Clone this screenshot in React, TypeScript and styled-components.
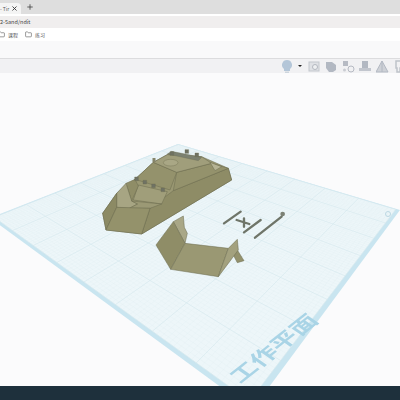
import styled, { createGlobalStyle } from 'styled-components';
import { Folder, Plus, X } from 'lucide-react';

const GlobalStyle = createGlobalStyle`
    html, body {
        margin: 0;
        padding: 0;
        overflow: hidden;
        background: #fbfbfc;
        font-family: "Noto Sans CJK SC", "Noto Sans", sans-serif;
    }
`;

type Point = [number, number];

// the workplane corners as seen on screen
const TOP: Point = [178, 144];
const RIGHT: Point = [400, 210];
const BOTTOM: Point = [252, 410];
const LEFT: Point = [-10, 218];

// unit square to quad, u runs top->right, v runs top->left
function project(u: number, v: number): Point {
    const [x0, y0] = TOP;
    const [x1, y1] = RIGHT;
    const [x2, y2] = BOTTOM;
    const [x3, y3] = LEFT;
    const dx1 = x1 - x2;
    const dx2 = x3 - x2;
    const sx = x0 - x1 + x2 - x3;
    const dy1 = y1 - y2;
    const dy2 = y3 - y2;
    const sy = y0 - y1 + y2 - y3;
    const den = dx1 * dy2 - dx2 * dy1;
    const g = (sx * dy2 - dx2 * sy) / den;
    const h = (dx1 * sy - sx * dy1) / den;
    const a = x1 - x0 + g * x1;
    const b = x3 - x0 + h * x3;
    const d = y1 - y0 + g * y1;
    const e = y3 - y0 + h * y3;
    const w = g * u + h * v + 1;
    return [(a * u + b * v + x0) / w, (d * u + e * v + y0) / w];
}

function quad(min: number, max: number) {
    return [project(min, min), project(max, min), project(max, max), project(min, max)]
        .map((p) => p.join(','))
        .join(' ');
}

function gridPath(steps: number, min: number, max: number) {
    let d = '';
    for (let i = 0; i <= steps; i++) {
        const t = min + ((max - min) * i) / steps;
        const a = project(t, min);
        const b = project(t, max);
        const c = project(min, t);
        const e = project(max, t);
        d += `M${a[0]} ${a[1]}L${b[0]} ${b[1]}M${c[0]} ${c[1]}L${e[0]} ${e[1]}`;
    }
    return d;
}

const HULL_FACES: { points: string; fill: string }[] = [
    { points: '38,250 80,190 135,148 190,97 235,72 335,80 415,115 425,150 155,312 48,300', fill: '#9a9873' },
    { points: '155,312 180,235 250,182 415,115 425,150', fill: '#8e8c66' },
    { points: '260,127 365,100 415,115 250,182', fill: '#94926c' },
    { points: '135,148 190,97 260,127 240,180', fill: '#94926c' },
    { points: '190,97 232,74 335,80 365,100 260,127', fill: '#a09e7b' },
    { points: '360,97 395,110 375,122', fill: '#b5b394' },
    { points: '130,210 145,165 232,185 215,222', fill: '#a09e7a' },
    { points: '108,160 135,148 145,168 125,213', fill: '#8f8d67' },
    { points: '80,190 108,160 125,213 143,222 118,235 80,232', fill: '#a7a583' },
    { points: '125,213 215,222 180,235 118,235 143,222', fill: '#9b9975' },
    { points: '38,250 80,190 80,232 48,300', fill: '#8c8a64' },
    { points: '80,232 180,235 155,312 48,300', fill: '#94926b' },
];

const WALL_FACES: { points: string; fill: string }[] = [
    { points: '262,150 282,182 262,188 250,165', fill: '#93916c' },
    { points: '70,65 100,48 103,82 112,100 105,130', fill: '#a9a787' },
    { points: '18,135 70,65 105,130 62,208', fill: '#8f8d67' },
    { points: '105,130 235,145 205,230 62,208', fill: '#9a9873' },
    { points: '235,145 262,118 265,150 205,230', fill: '#a3a17e' },
];

const HULL_STUDS: Point[] = [
    [139, 146],
    [164, 156],
    [190, 167],
    [218, 179],
    [245, 70],
    [290, 64],
    [320, 74],
];

const TOOL_ICONS = ['photo', 'shape', 'group', 'print', 'warn', 'more'] as const;

function ToolIcon({ kind }: { kind: (typeof TOOL_ICONS)[number] }) {
    return (
        <IconFrame width="13" height="13" viewBox="0 0 13 13">
            {kind === 'photo' && (
                <>
                    <rect x="1" y="2" width="10" height="9" fill="#dfe1e5" stroke="#c3c7cd" />
                    <circle cx="7" cy="7" r="2.5" fill="#eef0f2" stroke="#b4b8c0" />
                </>
            )}
            {kind === 'shape' && <path d="M1 2h6l4 3v5l-3 2H4L1 8z" fill="#b2b8c2" />}
            {kind === 'group' && (
                <>
                    <rect x="1" y="1" width="5" height="5" fill="#b6bac3" />
                    <circle cx="9" cy="9" r="3" fill="none" stroke="#b6bac3" />
                    <circle cx="2.5" cy="10" r="1.5" fill="#c9ccd2" />
                </>
            )}
            {kind === 'print' && (
                <>
                    <rect x="3" y="1" width="6" height="7" fill="#b2b8c2" />
                    <rect x="0" y="8" width="12" height="3" fill="#c2c6ce" />
                </>
            )}
            {kind === 'warn' && <path d="M6 1l6 11H0zM6 1v11" fill="#ced1d7" stroke="#b2b8c2" />}
            {kind === 'more' && <path d="M3 1h6v7H7v4H4V8H3z" fill="none" stroke="#bfc3ca" strokeWidth="1.5" />}
        </IconFrame>
    );
}

function Workplane() {
    return (
        <Scene viewBox="0 73 400 313">
            <polygon points={quad(0, 1)} fill="#c9e5f0" />
            <polygon points={quad(0.006, 0.988)} fill="#edf6f9" />
            <path d={gridPath(80, 0.006, 0.988)} stroke="#e0eef3" strokeWidth="0.3" fill="none" />
            <path d={gridPath(8, 0.006, 0.988)} stroke="#d3e6ed" strokeWidth="0.5" fill="none" />
            <PlaneLabel transform="matrix(.95 -.75 .8 .55 240 384)">工作平面</PlaneLabel>
            <circle cx="388" cy="214" r="2.5" fill="none" stroke="#bcd8e3" strokeWidth="1" />

            <g transform="translate(90 130) scale(0.3333)" stroke="#6e6e52" strokeWidth="1.6" strokeLinejoin="round">
                {HULL_FACES.map((face) => (
                    <polygon key={face.points} points={face.points} fill={face.fill} />
                ))}
                <ellipse cx="242" cy="98" rx="22" ry="10" fill="#a9a785" strokeWidth="1.2" />
                <polygon points="232,72 245,64 335,82 325,92" fill="#7b8070" strokeWidth="1" />
                <path d="M192 96v-12" stroke="#85846a" strokeWidth="9" />
                {HULL_STUDS.map(([x, y]) => (
                    <rect key={`${x}-${y}`} x={x - 5} y={y - 5} width="11" height="11" fill="#6f7263" strokeWidth="1" />
                ))}
            </g>

            <g transform="translate(150 200) scale(0.3333)" stroke="#6e6e52" strokeWidth="1.6" strokeLinejoin="round">
                {WALL_FACES.map((face) => (
                    <polygon key={face.points} points={face.points} fill={face.fill} />
                ))}
                <g stroke="#6f7569" strokeWidth="7" strokeLinecap="round" fill="none">
                    <path d="M222 70L272 35" />
                    <path d="M282 97L332 60" />
                    <path d="M315 113L395 50" />
                    <path d="M260 60L298 72M282 55V80" />
                </g>
                <circle cx="398" cy="42" r="7" fill="#7c8175" stroke="none" />
            </g>
        </Scene>
    );
}

export default function App() {
    return (
        <>
            <GlobalStyle />
            <Page>
                <TabStrip>
                    <Tab>
                        <TabTitle>- Tir</TabTitle>
                        <X size={7} strokeWidth={3} color="#333" />
                    </Tab>
                    <Plus size={8} strokeWidth={2.5} color="#444" />
                </TabStrip>
                <AddressBar>2-5and/ndit</AddressBar>
                <Bookmarks>
                    <Bookmark>
                        <Folder size={7} color="#555" />
                        课程
                    </Bookmark>
                    <Bookmark>
                        <Folder size={7} color="#555" />
                        练习
                    </Bookmark>
                </Bookmarks>
                <AppHeader />
                <Toolbar>
                    <Bulb>
                        <svg width="10" height="13" viewBox="0 0 10 13">
                            <path d="M5 0a5 5 0 0 1 3 9v2H2V9a5 5 0 0 1 3-9z" fill="#b4c6d8" />
                            <rect x="3" y="11.5" width="4" height="1.5" fill="#cdd5dd" />
                        </svg>
                    </Bulb>
                    <Caret />
                    {TOOL_ICONS.map((kind) => (
                        <ToolIcon key={kind} kind={kind} />
                    ))}
                </Toolbar>
                <Workplane />
                <Footer />
            </Page>
        </>
    );
}

const Page = styled.div`
    width: 400px;
    height: 400px;
    display: flex;
    flex-direction: column;
    overflow: hidden;
    background: #fbfbfc;
`;

const TabStrip = styled.div`
    height: 14px;
    flex: none;
    display: flex;
    align-items: flex-end;
    gap: 5px;
    background: #dedede;
    border-bottom: 2px solid #fff;
    svg:last-child {
        align-self: center;
    }
`;

const Tab = styled.div`
    width: 21px;
    height: 11px;
    display: flex;
    align-items: center;
    justify-content: space-between;
    padding-right: 3px;
    box-sizing: border-box;
    background: #f4f4f4;
    border-radius: 0 4px 0 0;
`;

const TabTitle = styled.span`
    font-size: 5px;
    color: #555;
`;

const AddressBar = styled.div`
    height: 12px;
    flex: none;
    line-height: 12px;
    background: #f0eeee;
    font-size: 5.5px;
    color: #444;
`;

const Bookmarks = styled.div`
    height: 13px;
    flex: none;
    display: flex;
    align-items: center;
    gap: 7px;
    margin-left: -2px;
    background: #fff;
`;

const Bookmark = styled.span`
    display: flex;
    align-items: center;
    gap: 3px;
    font-size: 5px;
    color: #555;
`;

const AppHeader = styled.div`
    height: 17px;
    flex: none;
    background: #f9f9fa;
    border-bottom: 1px solid #dcdcde;
`;

const Toolbar = styled.div`
    height: 14px;
    flex: none;
    display: flex;
    align-items: center;
    justify-content: flex-end;
    gap: 4px;
    margin-right: -6px;
    background: #f1f1f3;
`;

const IconFrame = styled.svg`
    filter: blur(0.4px);
`;

const Bulb = styled.span`
    display: flex;
    margin-right: 2px;
    filter: blur(0.4px);
`;

const Caret = styled.span`
    width: 0;
    height: 0;
    margin-right: 2px;
    border-left: 2px solid transparent;
    border-right: 2px solid transparent;
    border-top: 2px solid #222;
`;

const Scene = styled.svg`
    display: block;
    width: 400px;
    height: 313px;
    flex: none;
    filter: blur(0.25px);
`;

const PlaneLabel = styled.text`
    font-family: "Noto Sans CJK SC", sans-serif;
    font-size: 21px;
    font-weight: 700;
    fill: #a9d4e6;
`;

const Footer = styled.div`
    flex: 1;
    background: #1e303c;
`;
